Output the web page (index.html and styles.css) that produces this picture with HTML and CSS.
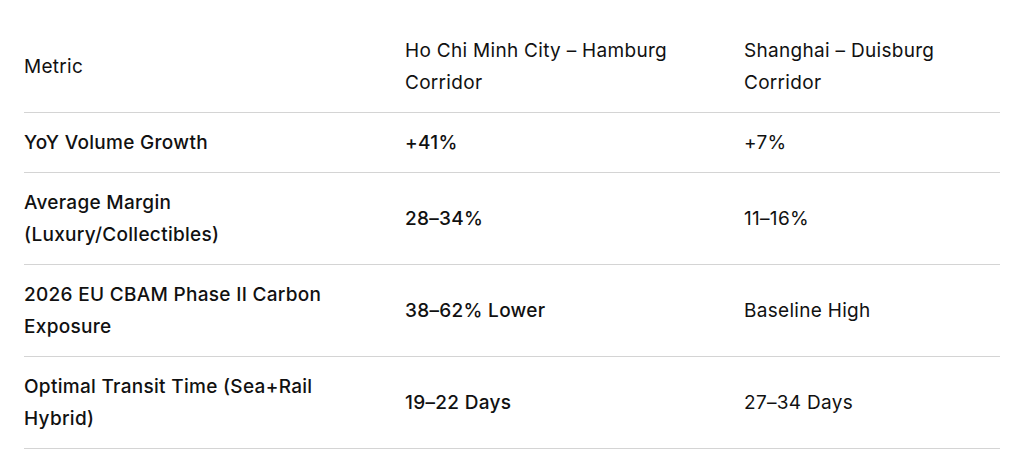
FILE: index.html
```html
<!DOCTYPE html>
<html>
<head>
<meta charset="utf-8">
<link rel="stylesheet" href="styles.css">
</head>
<body>
<div class="wrap">
<table class="cmp">
  <colgroup>
    <col class="c1"><col class="c2"><col class="c3">
  </colgroup>
  <thead>
    <tr>
      <th>Metric</th>
      <th>Ho Chi Minh City – Hamburg Corridor</th>
      <th>Shanghai – Duisburg Corridor</th>
    </tr>
  </thead>
  <tbody>
    <tr>
      <td class="label">YoY Volume Growth</td>
      <td class="strong">+41%</td>
      <td>+7%</td>
    </tr>
    <tr>
      <td class="label">Average Margin (Luxury/Collectibles)</td>
      <td class="strong">28–34%</td>
      <td>11–16%</td>
    </tr>
    <tr>
      <td class="label">2026 EU CBAM Phase II Carbon Exposure</td>
      <td class="strong">38–62% Lower</td>
      <td>Baseline High</td>
    </tr>
    <tr>
      <td class="label">Optimal Transit Time (Sea+Rail Hybrid)</td>
      <td class="strong">19–22 Days</td>
      <td>27–34 Days</td>
    </tr>
  </tbody>
</table>
</div>
</body>
</html>
```

FILE: styles.css
```css
html, body {
  margin: 0;
  padding: 0;
  background: #ffffff;
}
body {
  font-family: Inter, "Noto Sans", sans-serif;
  color: #111111;
  font-size: 19px;
  letter-spacing: 0.3px;
}
.wrap {
  padding: 21px 24px 0 24px;
}
.cmp {
  width: 976px;
  border-collapse: collapse;
  table-layout: fixed;
}
.c1 { width: 381px; }
.c2 { width: 339px; }
.c3 { width: 256px; }
.cmp th,
.cmp td {
  text-align: left;
  vertical-align: middle;
  padding: 14px 24px 13px 0;
  line-height: 32px;
  border-bottom: 1px solid #d4d4d4;
}
.cmp th:first-child,
.cmp td:first-child {
  padding-right: 60px;
}
.cmp th {
  font-weight: 400;
}
.cmp td {
  font-weight: 400;
}
.cmp td.label,
.cmp td.strong {
  font-weight: 500;
}
```
